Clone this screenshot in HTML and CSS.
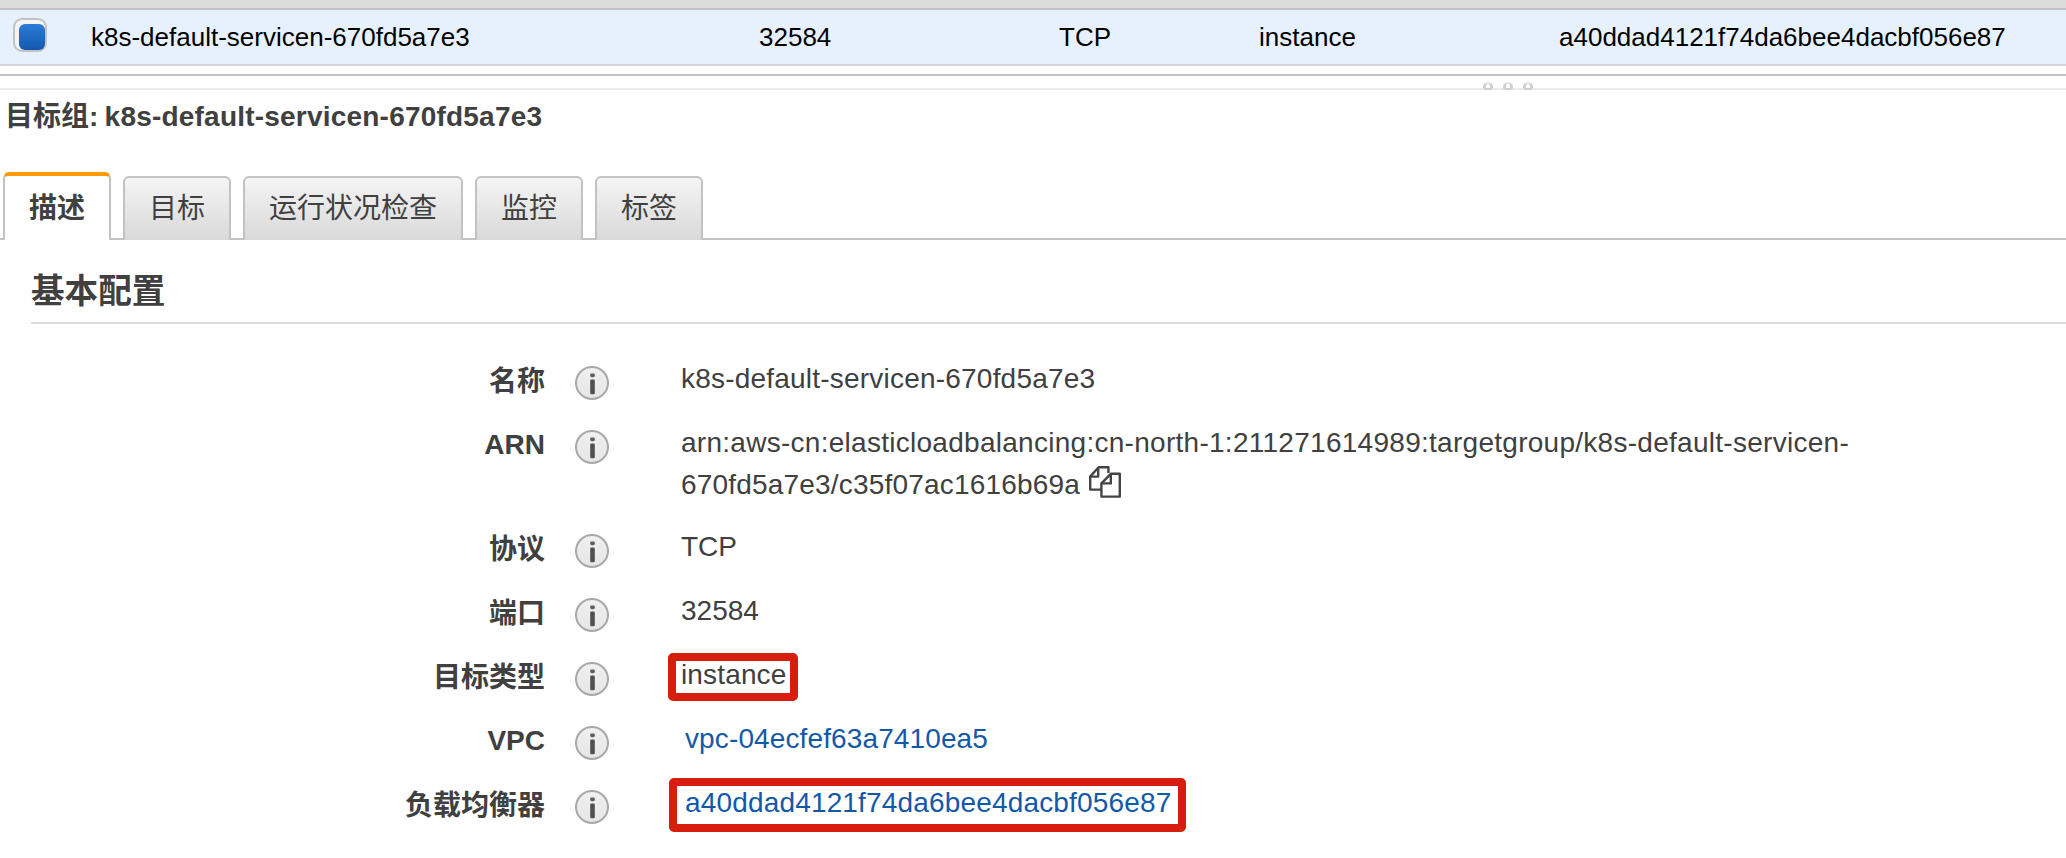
FILE: index.html
```
<!DOCTYPE html>
<html lang="zh-CN">
<head>
<meta charset="utf-8">
<title>目标组</title>
<link rel="stylesheet" href="styles.css">
</head>
<body>
<svg class="defs" width="0" height="0">
  <defs>
    <linearGradient id="infoFill" x1="0" y1="0" x2="0" y2="1"><stop offset="0" stop-color="#f0f0f0"/><stop offset="1" stop-color="#e6e6e6"/></linearGradient>
  </defs>
  <symbol id="info" viewBox="0 0 34 34">
    <circle cx="17" cy="17" r="16" fill="url(#infoFill)" stroke="#a8a8a8" stroke-width="2"/>
    <rect x="15.2" y="7.4" width="4.6" height="3.8" rx="1.4" fill="#5c5c5c"/>
    <rect x="15.2" y="13.6" width="4.6" height="14.6" rx="1.2" fill="#505050"/>
  </symbol>
</svg>
<div class="topstrip"></div>
<div class="row">
  <span class="check"><i></i></span>
  <span class="c-name">k8s-default-servicen-670fd5a7e3</span>
  <span class="c-port">32584</span>
  <span class="c-proto">TCP</span>
  <span class="c-type">instance</span>
  <span class="c-lb">a40ddad4121f74da6bee4dacbf056e87</span>
</div>
<div class="splitter"><i></i><i></i><i></i></div>
<h1 class="title">目标组: <span class="tname">k8s-default-servicen-670fd5a7e3</span></h1>
<nav class="tabs">
  <a class="tab active">描述</a>
  <a class="tab">目标</a>
  <a class="tab">运行状况检查</a>
  <a class="tab">监控</a>
  <a class="tab">标签</a>
</nav>
<section class="panel">
  <h2 class="heading">基本配置</h2>
  <div class="fields">
    <div class="field"><b class="label">名称</b><svg class="info"><use href="#info"/></svg><span class="value v-name">k8s-default-servicen-670fd5a7e3</span></div>
    <div class="field tall"><b class="label latin">ARN</b><svg class="info"><use href="#info"/></svg><span class="value"><span class="arn1">arn:aws-cn:elasticloadbalancing:cn-north-1:211271614989:targetgroup/k8s-default-servicen-</span><br><span class="arn2">670fd5a7e3/c35f07ac1616b69a</span><svg class="copy" viewBox="0 0 32 32" fill="none" stroke="#444" stroke-width="2.4" stroke-linejoin="round"><path d="M12 23.6H1.2V10.6L9.6 1.2H19.4V7"/><path d="M9.2 1.6V10.6H1.4"/><path d="M21.8 7.8H30.8V30.6H12.4V17.4Z"/><path d="M21.8 8V17.4H12.6"/></svg></span></div>
    <div class="field"><b class="label">协议</b><svg class="info"><use href="#info"/></svg><span class="value">TCP</span></div>
    <div class="field"><b class="label">端口</b><svg class="info"><use href="#info"/></svg><span class="value">32584</span></div>
    <div class="field"><b class="label">目标类型</b><svg class="info"><use href="#info"/></svg><span class="value"><span class="mark m-type">instance</span></span></div>
    <div class="field"><b class="label latin">VPC</b><svg class="info"><use href="#info"/></svg><span class="value"><a class="link vpc">vpc-04ecfef63a7410ea5</a></span></div>
    <div class="field"><b class="label">负载均衡器</b><svg class="info"><use href="#info"/></svg><span class="value"><a class="link mark m-lb">a40ddad4121f74da6bee4dacbf056e87</a></span></div>
  </div>
</section>
</body>
</html>
```
FILE: styles.css
```
* { box-sizing: border-box; }
body {
  margin: 0;
  width: 2066px;
  height: 858px;
  overflow: hidden;
  background: #fff;
  color: #404040;
  font: 28px/42px "Liberation Sans", "Noto Sans CJK SC", sans-serif;
  white-space: nowrap;
}
.defs { position: absolute; }
.topstrip { height: 10px; background: #dcdcdc; border-bottom: 2px solid #c0c0c0; }
.row {
  display: grid;
  grid-template-columns: 91px 668px 300px 200px 300px 1fr;
  height: 56px;
  background: #e7f1fe;
  border-bottom: 2px solid #d4d5d9;
  color: #000;
  font-size: 26px;
  line-height: 54px;
}
.check {
  width: 34px;
  height: 34px;
  margin: 8px 0 0 13px;
  padding: 4px 0 0 4px;
  border: 2px solid #c2c2c2;
  border-radius: 9px;
  background: #f3f3f3;
}
.check i {
  display: block;
  width: 26px;
  height: 26px;
  border-radius: 6px;
  background: linear-gradient(#2b7bd6, #1459ae);
}
.splitter {
  display: flex;
  gap: 10px;
  height: 24px;
  padding: 16px 0 0 1483px;
  border-bottom: 2px solid #ececec;
  background: linear-gradient(#c2c2c2, #c2c2c2) 0 8px / 100% 2px no-repeat;
}
.splitter i {
  width: 10px;
  height: 8px;
  border: 3px solid #cfcfcf;
  border-top: 2px solid #e4e4e4;
  border-bottom-width: 2px;
  border-radius: 5px 5px 3px 3px;
}
.title { margin: 6px 0 0 5px; font-size: 28px; line-height: 42px; }
.tname { margin-left: -1.5px; letter-spacing: 0.21px; }
.tabs {
  display: flex;
  align-items: flex-end;
  gap: 12px;
  height: 68px;
  margin-top: 34px;
  padding-left: 3px;
  background: linear-gradient(#c2c2c2, #c2c2c2) 0 100% / 100% 2px no-repeat;
}
.tab {
  height: 64px;
  padding: 0 24px;
  border: 2px solid #c2c2c2;
  border-bottom: 0;
  border-radius: 6px 6px 0 0;
  background: linear-gradient(#f4f4f4, #d9d9d9);
  line-height: 62px;
}
.tab.active {
  height: 68px;
  border-top: 4px solid #f90;
  background: #fff;
  font-weight: bold;
  line-height: 66px;
}
.panel { padding-left: 31px; }
.heading {
  height: 84px;
  margin: 0;
  border-bottom: 2px solid #dcdcdc;
  font-size: 33.6px;
  line-height: 103px;
}
.fields { padding-top: 36px; }
.field {
  display: grid;
  grid-template-columns: 514px 34px 1fr;
  column-gap: 30px;
  height: 64px;
}
.field.tall { height: 104px; }
.label { padding-top: 1px; text-align: right; }
.label.latin { padding-top: 0; }
.info { width: 34px; height: 34px; margin-top: 6px; }
.value { padding-left: 42px; margin-top: -2px; }
.v-name { letter-spacing: 0.21px; }
.arn1 { letter-spacing: 0.275px; }
.arn2 { letter-spacing: 0.19px; }
.copy { width: 32px; height: 32px; margin-left: 9px; vertical-align: -4px; }
.link { color: #1459a8; }
.vpc { margin-left: 4px; letter-spacing: 0.12px; }
.mark {
  display: inline-block;
  border: 8px solid #d61d0e;
  border-radius: 5px;
}
.m-type { width: 130px; height: 48px; margin: -3px 0 0 -13px; padding-left: 5px; line-height: 28px; letter-spacing: 0.15px; }
.m-lb { width: 517px; height: 54px; margin: -7px 0 0 -12px; padding-left: 8px; line-height: 34px; letter-spacing: 0.165px; }
```
